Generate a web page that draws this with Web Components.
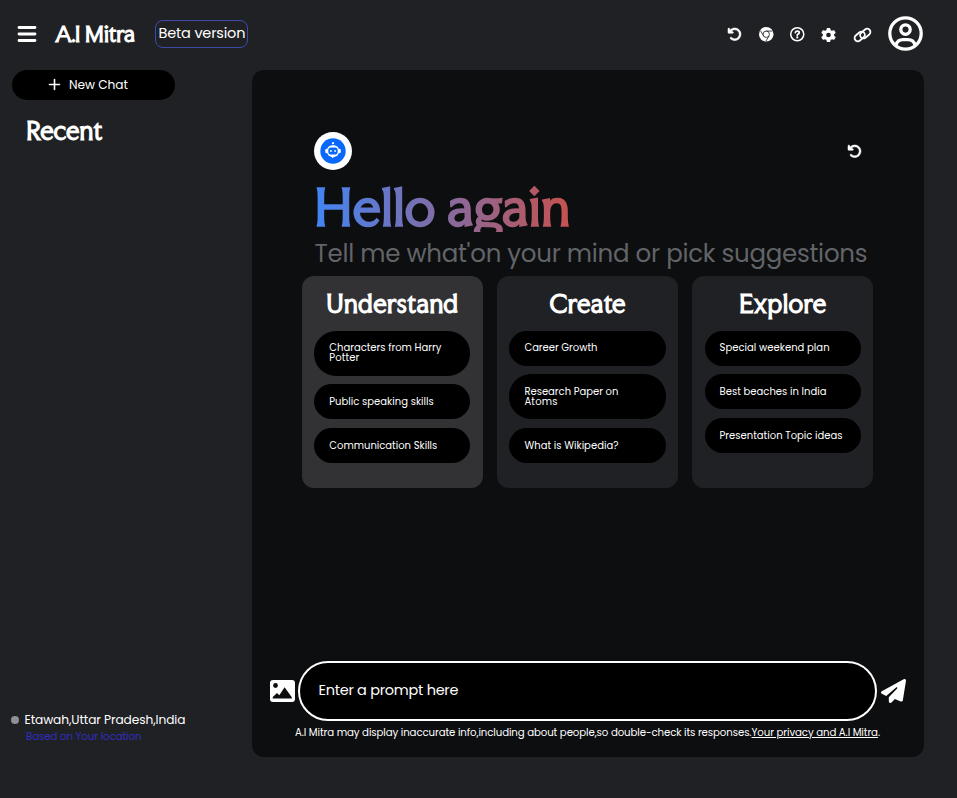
<!DOCTYPE html>
<html lang="en">
<head>
<meta charset="utf-8">
<title>A.I Mitra</title>
<style>
html,body{margin:0;height:100%;background:#202124;color:#fff;font-family:Poppins,Inter,sans-serif;overflow:hidden}
</style>
</head>
<body>
<mitra-app></mitra-app>
<script>
const define=(name,html,init)=>customElements.define(name,class extends HTMLElement{
  connectedCallback(){
    if(this.shadowRoot)return;
    const root=this.attachShadow({mode:'open'});
    root.innerHTML=typeof html==='function'?html(this):html;
    if(init)init(this,root);
  }
});

// One line of text, tracked so that it spans the width given in "w".
define('fit-text',`<style>:host{display:block;white-space:nowrap;flex:none}span{display:inline-block;text-decoration:inherit}</style><span><slot></slot></span>`,(el,root)=>{
  const s=root.querySelector('span'),w=+el.getAttribute('w');
  const n=el.textContent.length;
  el.style.width=w+'px';
  s.style.letterSpacing=((w-s.getBoundingClientRect().width)/(n-1))+'px';
});

const icons={
menu:['0 0 18 16','<path d="M1 1.5h16M1 8h16M1 14.5h16" stroke="currentColor" stroke-width="2.8" stroke-linecap="round"/>'],
undo:['16 32 464 448','<path stroke="currentColor" stroke-width="18" d="M125.7 160H176c17.7 0 32 14.3 32 32s-14.3 32-32 32H48c-17.7 0-32-14.3-32-32V64c0-17.7 14.3-32 32-32s32 14.3 32 32v51.2L97.6 97.6c87.5-87.5 229.3-87.5 316.8 0s87.5 229.3 0 316.8s-229.3 87.5-316.8 0c-12.5-12.5-12.5-32.8 0-45.3s32.8-12.5 45.3 0c62.5 62.5 163.8 62.5 226.3 0s62.5-163.8 0-226.3s-163.8-62.5-226.3 0L125.7 160z"/>'],
chrome:['0 0 30 30','<circle cx="15" cy="15" r="15"/><g fill="none" stroke="#202124" stroke-width="1.7"><circle cx="15" cy="15" r="6.6"/><path d="M15 8.4H28M9.3 18.3 3.2 7.5M20.7 18.3 14.5 29"/></g>'],
help:['0 0 30 30','<circle cx="15" cy="15" r="13.5" fill="none" stroke="currentColor" stroke-width="3.2"/><path d="M11 11.6c.3-2 1.600-3 4-3 2.600 0 4.200 1.300 4.200 3.300 0 2.900-4.200 2.700-4.200 5.200" fill="none" stroke="currentColor" stroke-width="3.600" stroke-linecap="round"/><circle cx="15" cy="21.500" r="2.200"/>'],
gear:['0 0 512 512','<path fill-rule="evenodd" d="M495.900 166.600c3.200 8.700 .5 18.400-6.400 24.600l-43.300 39.400c1.100 8.300 1.700 16.800 1.700 25.400s-.6 17.100-1.700 25.400l43.300 39.400c6.900 6.200 9.600 15.900 6.400 24.600c-4.400 11.900-9.700 23.300-15.800 34.300l-4.700 8.100c-6.600 11-14 21.400-22.100 31.200c-5.900 7.200-15.700 9.600-24.500 6.800l-55.700-17.700c-13.400 10.300-28.200 18.900-44 25.400l-12.500 57.100c-2 9.100-9 16.300-18.200 17.800c-13.800 2.300-28 3.500-42.500 3.500s-28.700-1.200-42.500-3.500c-9.200-1.500-16.200-8.700-18.200-17.800l-12.500-57.100c-15.800-6.500-30.600-15.100-44-25.400L83.100 425.900c-8.800 2.800-18.600 .3-24.500-6.800c-8.100-9.800-15.500-20.200-22.100-31.200l-4.700-8.100c-6.100-11-11.400-22.400-15.800-34.300c-3.200-8.700-.5-18.400 6.400-24.600l43.300-39.400C64.600 273.100 64 264.600 64 256s.6-17.100 1.700-25.400L22.400 191.200c-6.900-6.200-9.600-15.900-6.400-24.600c4.400-11.900 9.700-23.300 15.800-34.300l4.700-8.100c6.600-11 14-21.400 22.100-31.200c5.900-7.200 15.700-9.600 24.500-6.800l55.700 17.700c13.400-10.300 28.200-18.900 44-25.400l12.500-57.100c2-9.100 9-16.300 18.200-17.800C227.300 1.200 241.500 0 256 0s28.700 1.200 42.500 3.500c9.200 1.500 16.200 8.700 18.200 17.800l12.500 57.100c15.800 6.500 30.600 15.100 44 25.400l55.700-17.700c8.800-2.800 18.600-.3 24.500 6.800c8.100 9.800 15.500 20.200 22.100 31.200l4.700 8.100c6.100 11 11.400 22.400 15.800 34.300zM256 336a80 80 0 1 0 0-160 80 80 0 1 0 0 160z"/>'],
link:['0 0 34 28','<g fill="none" stroke="currentColor" stroke-width="3.600"><rect x="0" y="10.300" width="23" height="13" rx="6.500" transform="rotate(-40 11.500 16.800)"/><rect x="11" y="4.700" width="23" height="13" rx="6.500" transform="rotate(-40 22.500 11.200)"/></g>'],
user:['0 0 35 35','<g fill="none" stroke="currentColor" stroke-width="3.300"><circle cx="17.500" cy="17.500" r="15.700"/><circle cx="17.500" cy="13.600" r="4.700"/><path d="M8 29c1.200-4 4-5.300 7-5.300h5c3 0 5.800 1.300 7 5.300"/></g>'],
plus:['0 0 11 11','<path d="M5.500 .5v10M.5 5.500h10" stroke="currentColor" stroke-width="1.600" stroke-linecap="round"/>'],
image:['0 0 25 22','<rect width="25" height="22" rx="3"/><circle cx="5.500" cy="5.500" r="2.400" fill="#0d0e10"/><path d="M2.800 18.500v-1.500l4.200-4 2.300 2.300 5.300-8 7.200 10v1.200z" fill="#0d0e10"/>'],
send:['0 0 512 512','<path d="M498.100 5.600c10.100 7 15.400 19.100 13.500 31.200l-64 416c-1.500 9.700-7.400 18.200-16 23s-18.900 5.400-28 1.600L284 427.700l-68.500 74.100c-8.900 9.700-22.900 12.900-35.200 8.100S160 493.200 160 480V396.400c0-4 1.500-7.800 4.200-10.700L331.800 202.800c5.800-6.300 5.600-16-.4-22s-15.700-6.400-22-.7L106 360.800 17.700 316.600C7.100 311.300 .3 300.700 0 288.900s5.900-22.800 16.100-28.700l448-256c10.700-6.100 23.900-5.500 34 1.400z"/>'],
bot:['0 0 38 38','<circle cx="19" cy="19" r="19"/><circle cx="19" cy="19" r="12.700" fill="#0868fb"/><circle cx="19" cy="11.200" r="1.100"/><ellipse cx="12.500" cy="19" rx="1.400" ry="2.200"/><ellipse cx="25.500" cy="19" rx="1.400" ry="2.200"/><rect x="12.900" y="13.300" width="12.200" height="11.400" rx="5.200"/><path d="M17 24h4l-2.500 2.200z"/><rect x="14.300" y="15.600" width="9.400" height="6.900" rx="2.800" fill="#0868fb"/><circle cx="16.900" cy="19" r=".9"/><circle cx="21.100" cy="19" r=".9"/>']
};
define('ui-icon',el=>{const [vb,d]=icons[el.getAttribute('name')];
return `<style>:host{display:block;flex:none}svg{display:block;width:100%;height:100%;overflow:visible;fill:currentColor}</style><svg viewBox="${vb}" preserveAspectRatio="none">${d}</svg>`});

define('top-bar',`<style>
:host{display:flex;height:70px;box-sizing:border-box}
.menu{width:18px;height:16px;margin:25.500px 0 0 17.500px}
.brand{font:700 21px/30px "Faculty Glyphic",Lato,sans-serif;margin:19px 0 0 19.500px}
.beta{box-sizing:border-box;width:93px;height:28px;margin:20px 0 0 20px;border:1px solid #3d4cab;border-radius:8px;padding-left:2.500px;font-size:14.500px;line-height:25px}
.tools{display:flex;margin-left:auto;padding-right:34px}
.tools>*{margin-top:28px}
</style>
<ui-icon class="menu" name="menu"></ui-icon>
<fit-text class="brand" w="80">A.I Mitra</fit-text>
<div class="beta"><fit-text w="87">Beta version</fit-text></div>
<div class="tools">
<ui-icon name="undo" style="width:13px;height:12.500px;margin-top:28px"></ui-icon>
<ui-icon name="chrome" style="width:14.500px;height:14.500px;margin-left:17.500px;margin-top:27px"></ui-icon>
<ui-icon name="help" style="width:14.500px;height:14.500px;margin-left:17px;margin-top:27px"></ui-icon>
<ui-icon name="gear" style="width:15px;height:14px;margin-left:16.500px;margin-top:27.500px"></ui-icon>
<ui-icon name="link" style="width:17px;height:14px;margin-left:18px;margin-top:27.500px"></ui-icon>
<ui-icon name="user" style="width:35px;height:35px;margin:16px 0 0 17px"></ui-icon>
</div>`);

define('side-bar',`<style>
:host{display:flex;flex-direction:column;width:252px;flex:none;box-sizing:border-box;padding-left:12px}
.new{display:flex;align-items:center;box-sizing:border-box;width:163px;height:30px;border-radius:15px;background:#000;padding-left:37px;gap:9px;font-size:12.200px;line-height:30px}
.new ui-icon{width:11px;height:11px;margin-top:-1px}
.recent{font:700 24px/32px "Faculty Glyphic",Lato,sans-serif;margin:15px 0 0 14px}
.place{margin:auto 0 0 -1px;display:flex;align-items:center;gap:5.500px;font-size:12.200px;line-height:18px}
.dot{width:8px;height:8px;border-radius:50%;background:#909090}
.based{font-size:10.200px;line-height:14px;color:#322dc0;margin:1px 0 54px 14px}
</style>
<div class="new"><ui-icon name="plus"></ui-icon><fit-text w="59">New Chat</fit-text></div>
<fit-text class="recent" w="76.500">Recent</fit-text>
<div class="place"><span class="dot"></span><fit-text w="161">Etawah,Uttar Pradesh,India</fit-text></div>
<fit-text class="based" w="115.500">Based on Your location</fit-text>`);

define('topic-pill',`<style>
:host{display:block;box-sizing:border-box;background:#000;border-radius:22px;padding:12.800px 15px 12.200px;font-size:10px;line-height:10px}
</style><slot></slot>`);

define('topic-card',el=>`<style>
:host{display:flex;flex-direction:column;gap:8.600px;box-sizing:border-box;width:180.700px;height:212px;border-radius:12px;background:#202124;padding:12px 12.250px 0 12.300px}
:host([active]){background:#323234}
.title{font:700 24px/32px "Faculty Glyphic",Lato,sans-serif;align-self:center;margin-bottom:2px}
</style>
<fit-text class="title" w="${el.getAttribute('w')}">${el.getAttribute('title-text')}</fit-text><slot></slot>`);

define('prompt-bar',`<style>
:host{display:block;width:672px}
.row{display:flex;align-items:center;padding-left:18px}
.image{width:25px;height:22px}
.field{box-sizing:border-box;width:579px;height:60px;margin:0 3.500px 0 3px;border:2px solid #fff;border-radius:30px;background:#000;padding-left:18.500px;font-size:14.500px;line-height:55px}
.send{width:25px;height:24px}
.note{display:flex;font-size:10.200px;line-height:16px;margin:4px 0 0 43px}
.link{text-decoration:underline}
</style>
<div class="row"><ui-icon class="image" name="image"></ui-icon><div class="field"><fit-text w="140">Enter a prompt here</fit-text></div><ui-icon class="send" name="send"></ui-icon></div>
<div class="note"><fit-text w="456.500">A.I Mitra may display inaccurate info,including about people,so double-check its responses.</fit-text><fit-text class="link" w="126.500">Your privacy and A.I Mitra</fit-text><span>.</span></div>`);

define('chat-panel',`<style>
:host{display:flex;flex-direction:column;width:672px;height:687px;box-sizing:border-box;border-radius:12px;background:#0d0e10;padding-top:62px}
.head{display:flex;justify-content:space-between;align-items:center;margin:0 63.500px 0 62px}
.bot{width:38px;height:38px}.undo{width:13px;height:12.500px}
.hello{font:700 50px/62px "Faculty Glyphic","DejaVu Serif",serif;margin:6px 0 0 62px;height:56px;color:transparent;background:linear-gradient(90deg,#4285f4,#c5524f);-webkit-background-clip:text;background-clip:text}
.sub{font-size:24.500px;font-weight:400;line-height:36px;color:#626468;margin:4px 0 0 62.500px;height:40px}
.cards{display:flex;gap:14.450px;margin-left:50px}
prompt-bar{margin-top:auto;margin-bottom:16px}
</style>
<div class="head"><ui-icon class="bot" name="bot"></ui-icon><ui-icon class="undo" name="undo"></ui-icon></div>
<fit-text class="hello" w="256">Hello again</fit-text>
<fit-text class="sub" w="553">Tell me what'on your mind or pick suggestions</fit-text>
<div class="cards">
<topic-card active title-text="Understand" w="132">
<topic-pill><fit-text w="112">Characters from Harry</fit-text><fit-text w="30">Potter</fit-text></topic-pill>
<topic-pill><fit-text w="104.500">Public speaking skills</fit-text></topic-pill>
<topic-pill><fit-text w="108">Communication Skills</fit-text></topic-pill>
</topic-card>
<topic-card title-text="Create" w="76">
<topic-pill><fit-text w="73">Career Growth</fit-text></topic-pill>
<topic-pill><fit-text w="94">Research Paper on</fit-text><fit-text w="33">Atoms</fit-text></topic-pill>
<topic-pill><fit-text w="94">What is Wikipedia?</fit-text></topic-pill>
</topic-card>
<topic-card title-text="Explore" w="87">
<topic-pill><fit-text w="110">Special weekend plan</fit-text></topic-pill>
<topic-pill><fit-text w="107">Best beaches in India</fit-text></topic-pill>
<topic-pill><fit-text w="123">Presentation Topic ideas</fit-text></topic-pill>
</topic-card>
</div>
<prompt-bar></prompt-bar>`);

define('mitra-app',`<style>
:host{display:flex;flex-direction:column;width:957px;height:798px}
.body{display:flex;flex:1}
</style>
<top-bar></top-bar><div class="body"><side-bar></side-bar><chat-panel></chat-panel></div>`);
</script>
</body>
</html>
